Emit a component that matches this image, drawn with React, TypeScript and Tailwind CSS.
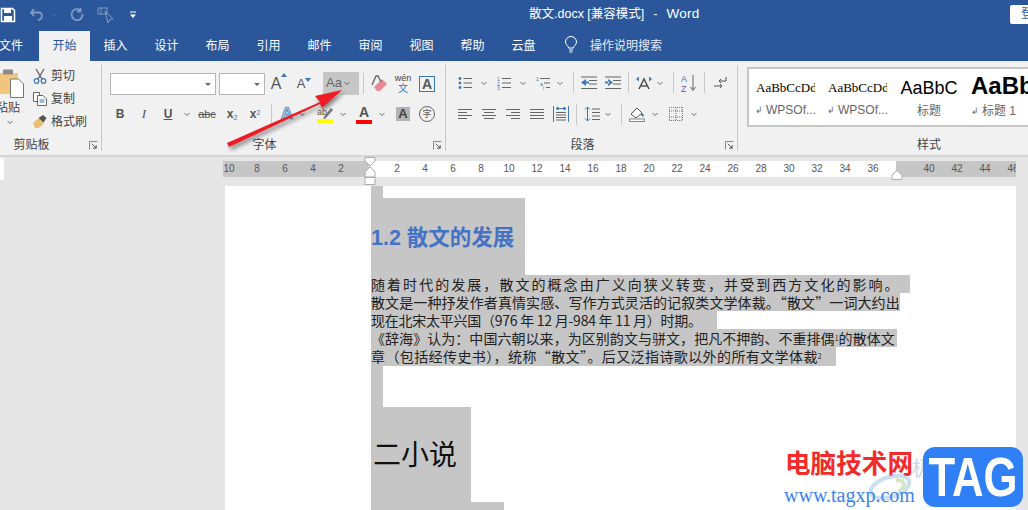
import type { ReactNode } from 'react'

const tabs = ['文件', '开始', '插入', '设计', '布局', '引用', '邮件', '审阅', '视图', '帮助', '云盘']
const leftNums = ['10', '8', '6', '4', '2', '']
const rightNums = ['2', '4', '6', '8', '10', '12', '14', '16', '18', '20', '22', '24', '26', '28', '30', '32', '34', '36', '', '40', '42', '44', '46']

function Chev({ className = '' }: { className?: string }) {
  return (
    <svg viewBox="0 0 10 10" className={`w-[10px] h-[10px] shrink-0 ${className}`}>
      <path d="M2.5 4 L5 6.5 L7.5 4" fill="none" stroke="#666" strokeWidth="1" />
    </svg>
  )
}

function Sep({ className = '' }: { className?: string }) {
  return <div className={`w-px h-[21px] bg-[#c8c8c8] shrink-0 ${className}`} />
}

function Launcher() {
  return (
    <svg viewBox="0 0 10 10" className="absolute right-[3px] bottom-[1px] w-[9px] h-[9px]">
      <path d="M.5 9.5V.5H9.5" fill="none" stroke="#777" />
      <path d="M3 3 L8 8 M8 4.5V8H4.5" fill="none" stroke="#444" />
    </svg>
  )
}

function Group({ label, className, labelClass, children }: { label: string; className: string; labelClass: string; children: ReactNode }) {
  return (
    <div className={`relative h-[86px] mt-[4px] border-r border-[#c6c6c6] shrink-0 ${className}`}>
      {children}
      <div className={`absolute left-0 right-0 bottom-[-1px] h-[14px] leading-[14px] text-center text-[12px] text-[#444] ${labelClass}`}>{label}</div>
      <Launcher />
    </div>
  )
}

// 段落 group lines, drawn from x/width pairs
function Lines({ rows }: { rows: [number, number, number][] }) {
  return (
    <svg viewBox="0 0 14 14" className="w-[14px] h-[14px] shrink-0">
      {rows.map(([x, y, w], i) => (
        <rect key={i} x={x} y={y} width={w} height="1" fill="#666" />
      ))}
    </svg>
  )
}

function Selected({ className, children }: { className: string; children: ReactNode }) {
  return (
    <div className={`bg-[#c6c6c6] h-[18px] leading-[18px] whitespace-nowrap text-[14px] text-[#222] font-['Noto_Sans_CJK_SC',sans-serif] ${className}`}>
      {children}
    </div>
  )
}

export default function App() {
  return (
    <div className="relative w-[1028px] h-[510px] overflow-hidden bg-[#e6e6e6] font-['Liberation_Sans','Noto_Sans_CJK_SC',sans-serif]">
      {/* title bar */}
      <div className="relative flex items-center h-[31px] pb-[2px] bg-[#2b579a] text-white">
        <svg viewBox="0 0 16 16" className="w-[16px] h-[16px] shrink-0">
          <path d="M1.5 1.5H12.5L14.5 3.5V14.5H1.5Z" fill="none" stroke="#fff" strokeWidth="1.6" />
          <rect x="4" y="2" width="7" height="4" fill="#fff" />
          <rect x="4" y="9" width="8" height="5" fill="#fff" />
        </svg>
        <svg viewBox="0 0 16 16" className="ml-[13px] w-[16px] h-[16px] shrink-0 opacity-40">
          <path d="M5 2 L2 5.5 L5 9 M2.5 5.5H10C14 5.5 14 12.5 9 13" fill="none" stroke="#fff" strokeWidth="1.8" />
        </svg>
        <Chev className="ml-[4px] opacity-40 invert" />
        <svg viewBox="0 0 16 16" className="ml-[10px] w-[16px] h-[16px] shrink-0 opacity-40">
          <path d="M11 3 A5.5 5.5 0 1 0 13.5 7 M11.5 1V4.5H8" fill="none" stroke="#fff" strokeWidth="1.8" />
        </svg>
        <svg viewBox="0 0 18 18" className="ml-[12px] w-[18px] h-[18px] shrink-0 opacity-40">
          <path d="M1 2H10V8H1Z M4 2V8" fill="none" stroke="#fff" />
          <path d="M8 5 L16 13 L12.5 13.5 L11 17Z" fill="none" stroke="#fff" />
        </svg>
        <svg viewBox="0 0 10 10" className="ml-[13px] w-[10px] h-[10px] shrink-0">
          <rect x="2" y="1.5" width="6" height="1" fill="#fff" />
          <path d="M2 4.5H8L5 8Z" fill="#fff" />
        </svg>
        <div className="flex items-baseline ml-[391px] w-[169px] text-[12.5px] whitespace-pre shrink-0">
          散文.docx [兼容模式]
          <span className="ml-[9px]">-</span>
          <span className="ml-[9px] text-[13.5px] tracking-[0.3px]">Word</span>
        </div>
        <div className="ml-[312px] w-[30px] h-[19px] shrink-0 bg-white rounded-[2px] text-[#2b579a] text-[12px] leading-[19px] pl-[11px] whitespace-nowrap">登录</div>
      </div>

      {/* tabs */}
      <div className="flex h-[30px] ml-[-17px] bg-[#2b579a] w-[1045px]">
        {tabs.map((t, i) => (
          <div
            key={t}
            className={
              i === 0
                ? 'w-[56px] text-center text-[12px] leading-[30px] text-white'
                : i === 1
                  ? 'w-[51px] text-center text-[12px] leading-[30px] bg-[#f1f1f1] text-[#2b579a]'
                  : 'w-[51px] text-center text-[12px] leading-[30px] text-white'
            }
          >
            {t}
          </div>
        ))}
        <svg viewBox="0 0 16 18" className="ml-[14px] mt-[5px] w-[16px] h-[18px]">
          <path d="M5.5 12C5.5 9.5 2.5 9 2.5 6A5.5 5.5 0 0 1 13.5 6C13.5 9 10.5 9.5 10.5 12Z M6 14H10 M6.5 16H9.5" fill="none" stroke="#fff" strokeWidth="1" />
        </svg>
        <div className="ml-[11px] text-[12px] leading-[30px] text-[#e4ebf5]">操作说明搜索</div>
      </div>

      {/* ribbon */}
      <div className="flex h-[94px] bg-[#f1f1f1] border-b-2 border-[#d5d5d5] box-content">
        <Group label="剪贴板" className="w-[102px]" labelClass="pr-[38px]">
          <div className="flex">
            <div className="w-[33px] h-[72px] shrink-0">
              <svg viewBox="0 0 24 30" className="mt-[3px] w-[24px] h-[30px]">
                <path d="M-2 5H18V26H-2Z" fill="#f0c67c" />
                <rect x="3" y="1.5" width="10" height="5" rx="1" fill="#8a8a8a" />
                <path d="M10.5 11H18.5L23.5 16V29.5H10.5Z" fill="#fff" stroke="#777" />
              </svg>
              <div className="mt-[2px] w-[20px] text-[12px] leading-[16px] text-[#444] whitespace-nowrap overflow-hidden flex justify-end">粘贴</div>
              <Chev className="ml-[5px] mt-[1px]" />
            </div>
            <div className="pt-[1px] text-[12px] text-[#444]">
              <div className="flex items-center h-[20px] gap-[4px]">
                <svg viewBox="0 0 14 16" className="w-[14px] h-[16px]">
                  <path d="M3 1 L9 11 M11 1 L5 11" stroke="#666" strokeWidth="1.4" fill="none" />
                  <circle cx="3.5" cy="13" r="2.3" fill="none" stroke="#3a78b8" strokeWidth="1.2" />
                  <circle cx="10.5" cy="13" r="2.3" fill="none" stroke="#3a78b8" strokeWidth="1.2" />
                </svg>
                剪切
              </div>
              <div className="flex items-center h-[20px] gap-[4px] mt-[3px]">
                <svg viewBox="0 0 14 14" className="w-[14px] h-[14px]">
                  <path d="M.5 .5H6.5V9.5H.5Z" fill="#fff" stroke="#666" />
                  <path d="M4.5 3.5H10L13.5 7V13.5H4.5Z" fill="#fff" stroke="#666" />
                  <path d="M6.5 8H11.5M6.5 10H11.5" stroke="#3a78b8" />
                </svg>
                复制
              </div>
              <div className="flex items-center h-[20px] gap-[4px] mt-[3px]">
                <svg viewBox="0 0 14 14" className="w-[14px] h-[14px]">
                  <path d="M0 8 L6 3 L11 8 L6 13 L2 13Z" fill="#e9bf74" />
                  <path d="M5.5 3 L10 0 L13.5 3 L10.5 7.5Z" fill="#555" />
                </svg>
                格式刷
              </div>
            </div>
          </div>
        </Group>

        <Group label="字体" className="w-[344px] pl-[8px] pt-[7px]" labelClass="pr-[18px]">
          <div className="flex h-[23px] items-center">
            <div className="flex items-center justify-end w-[106px] h-[22px] bg-white border border-[#b5b5b5] pr-[2px]">
              <svg viewBox="0 0 10 10" className="w-[10px] h-[10px]"><path d="M2 4H8L5 7Z" fill="#666" /></svg>
            </div>
            <div className="flex items-center justify-end ml-[3px] w-[46px] h-[22px] bg-white border border-[#b5b5b5] pr-[2px]">
              <svg viewBox="0 0 10 10" className="w-[10px] h-[10px]"><path d="M2 4H8L5 7Z" fill="#666" /></svg>
            </div>
            <div className="ml-[2px] w-[24px] flex justify-center text-[16px] text-[#555] relative">
              A<svg viewBox="0 0 6 4" className="w-[6px] h-[4px] mt-[1px]"><path d="M0 4L3 0L6 4Z" fill="#3a78b8" /></svg>
            </div>
            <div className="ml-[1px] w-[24px] flex justify-center text-[13px] text-[#555] items-end">
              A<svg viewBox="0 0 6 4" className="w-[6px] h-[4px] mb-[11px]"><path d="M0 0L3 4L6 0Z" fill="#3a78b8" /></svg>
            </div>
            <div className="ml-[7px] flex items-center w-[36px] h-[23px] bg-[#c6c6c6] pl-[3px] pb-[2px] text-[13px] text-[#666]">
              Aa<Chev />
            </div>
            <Sep className="ml-[4px]" />
            <div className="ml-[4px] w-[24px] flex justify-center">
              <svg viewBox="0 0 18 18" className="w-[18px] h-[18px]">
                <path d="M3 12 L11 4 L16 9 L9 16 L6 16Z" fill="#e98a96" />
                <path d="M1 10 L5 1 H7 L10 7" fill="none" stroke="#666" strokeWidth="1.4" />
              </svg>
            </div>
            <div className="w-[22px] text-center text-[#3a78b8]">
              <div className="text-[9px] leading-[9px] text-[#444]">wén</div>
              <div className="text-[10px] leading-[11px]">文</div>
            </div>
            <div className="ml-[5px] w-[16px] h-[16px] border border-[#3a78b8] text-[14px] leading-[14px] text-center font-bold text-[#555]">A</div>
          </div>
          <div className="flex h-[22px] items-center mt-[8px] text-[#555]">
            <div className="w-[20px] text-center text-[12px] font-bold">B</div>
            <div className="ml-[4px] w-[20px] text-center text-[13px] italic font-['Liberation_Serif',serif]">I</div>
            <div className="ml-[4px] w-[20px] text-center text-[12px] font-bold underline">U</div>
            <Chev className="ml-[4px]" />
            <div className="ml-[3px] w-[24px] text-center text-[11px] line-through">abc</div>
            <div className="ml-[3px] w-[20px] text-center text-[12px] font-bold">x<sub className="text-[7px] text-[#3a78b8] font-normal">2</sub></div>
            <div className="ml-[3px] w-[20px] text-center text-[12px] font-bold">x<sup className="text-[7px] text-[#3a78b8] font-normal">2</sup></div>
            <Sep className="ml-[6px]" />
            <div className="ml-[5px] w-[20px] text-center text-[17px] leading-[20px] font-bold text-[#a9c6e6] [-webkit-text-stroke:0.7px_#3a78b8]">A</div>
            <Chev />
            <div className="ml-[8px] w-[20px] flex flex-col items-center">
              <svg viewBox="0 0 18 14" className="w-[18px] h-[14px]">
                <text x="1" y="10" fontSize="9" fill="#555">ab</text>
                <path d="M7 13 L15 3 L17 5 L9 14Z" fill="#777" />
              </svg>
              <div className="w-[16px] h-[4px] bg-[#ffff00]" />
            </div>
            <Chev className="ml-[3px]" />
            <div className="ml-[6px] w-[20px] flex flex-col items-center">
              <div className="text-[14px] leading-[15px] font-bold">A</div>
              <div className="w-[16px] h-[4px] bg-[#ff0000]" />
            </div>
            <Chev className="ml-[3px]" />
            <div className="ml-[6px] flex justify-center w-[20px]">
              <div className="w-[14px] h-[14px] bg-[#b3b3b3] text-[13px] leading-[14px] text-center font-bold text-[#444]">A</div>
            </div>
            <div className="ml-[4px] flex justify-center w-[20px]">
              <div className="w-[16px] h-[16px] rounded-full border border-[#666] text-[9px] leading-[14px] text-center">字</div>
            </div>
          </div>
        </Group>

        <Group label="段落" className="w-[292px] pl-[12px] pt-[7px]" labelClass="pr-[18px]">
          <div className="flex h-[23px] items-center mt-[-1px]">
            <svg viewBox="0 0 14 14" className="w-[14px] h-[14px]">
              <circle cx="2" cy="2.5" r="1.4" fill="#3a78b8" /><circle cx="2" cy="7" r="1.4" fill="#3a78b8" /><circle cx="2" cy="11.5" r="1.4" fill="#3a78b8" />
              <path d="M5.5 2.5H14M5.5 7H14M5.5 11.5H14" stroke="#666" />
            </svg>
            <Chev className="ml-[7px]" />
            <svg viewBox="0 0 14 14" className="ml-[8px] w-[14px] h-[14px]">
              <text x="0" y="4.5" fontSize="5" fill="#3a78b8">1</text><text x="0" y="9.5" fontSize="5" fill="#3a78b8">2</text><text x="0" y="14" fontSize="5" fill="#3a78b8">3</text>
              <path d="M5 2.5H14M5 7H14M5 11.5H14" stroke="#666" />
            </svg>
            <Chev className="ml-[7px]" />
            <svg viewBox="0 0 14 14" className="ml-[8px] w-[14px] h-[14px]">
              <text x="0" y="4.5" fontSize="5" fill="#3a78b8">1</text><text x="4" y="9.5" fontSize="5" fill="#3a78b8">a</text><text x="7" y="14" fontSize="5" fill="#3a78b8">i</text>
              <path d="M4 2.5H14M8 7H14M10 11.5H14" stroke="#666" />
            </svg>
            <Chev className="ml-[5px]" />
            <Sep className="ml-[8px]" />
            <svg viewBox="0 0 16 14" className="ml-[7px] w-[16px] h-[14px]">
              <path d="M0 1H16M8 4.5H16M8 8H16M0 12.5H16" stroke="#666" /><path d="M0 6.5L5 3V10Z M4 5.5H8V7.5H4Z" fill="#3a78b8" />
            </svg>
            <svg viewBox="0 0 16 14" className="ml-[8px] w-[16px] h-[14px]">
              <path d="M0 1H16M8 4.5H16M8 8H16M0 12.5H16" stroke="#666" /><path d="M8 6.5L3 3V10Z M0 5.5H4V7.5H0Z" fill="#3a78b8" />
            </svg>
            <Sep className="ml-[7px]" />
            <svg viewBox="0 0 16 14" className="ml-[7px] w-[16px] h-[14px]">
              <path d="M3 13L8 3L13 13M5 10H11" fill="none" stroke="#555" strokeWidth="1.6" />
              <path d="M0 3L3 0.5V5.5Z M16 3L13 0.5V5.5Z" fill="#3a78b8" />
            </svg>
            <Chev className="ml-[3px]" />
            <Sep className="ml-[8px]" />
            <svg viewBox="0 0 16 18" className="ml-[7px] w-[16px] h-[18px]">
              <text x="0" y="8" fontSize="9" fill="#3a78b8">A</text><text x="0" y="17.5" fontSize="9" fill="#7a4fa3">Z</text>
              <path d="M12 1V16M9.5 13L12 16.5L14.5 13" fill="none" stroke="#666" />
            </svg>
            <Sep className="ml-[7px]" />
            <svg viewBox="0 0 16 14" className="ml-[7px] w-[16px] h-[14px]">
              <path d="M14 1V5H7M9 3L7 5L9 7" fill="none" stroke="#555" /><path d="M2 10H10M8 8L10 10L8 12" fill="none" stroke="#555" />
            </svg>
          </div>
          <div className="flex h-[22px] items-center mt-[9px]">
            <Lines rows={[[0, 2, 14], [0, 5, 9], [0, 8, 14], [0, 11, 9]]} />
            <div className="ml-[10px]"><Lines rows={[[0, 2, 14], [2, 5, 10], [0, 8, 14], [2, 11, 10]]} /></div>
            <div className="ml-[10px]"><Lines rows={[[0, 2, 14], [5, 5, 9], [0, 8, 14], [5, 11, 9]]} /></div>
            <div className="ml-[10px]"><Lines rows={[[0, 2, 14], [0, 5, 14], [0, 8, 14], [0, 11, 14]]} /></div>
            <svg viewBox="0 0 16 16" className="ml-[9px] w-[16px] h-[16px]">
              <path d="M.5 0V16M15.5 0V16" stroke="#3a78b8" /><path d="M3 2.5H13M3 2.5L5 1V4ZM13 2.5L11 1V4Z" stroke="#3a78b8" fill="#3a78b8" />
              <path d="M3 6.5H13M3 9H13M3 11.5H13M3 14H13" stroke="#666" />
            </svg>
            <Sep className="ml-[7px]" />
            <svg viewBox="0 0 16 16" className="ml-[7px] w-[16px] h-[16px]">
              <path d="M3.5 1V15M1 3.5L3.5 1L6 3.5M1 12.5L3.5 15L6 12.5" fill="none" stroke="#3a78b8" />
              <path d="M8 3H16M8 6.5H16M8 10H16M8 13.5H16" stroke="#666" />
            </svg>
            <Chev className="ml-[3px]" />
            <Sep className="ml-[8px]" />
            <svg viewBox="0 0 16 16" className="ml-[7px] w-[16px] h-[16px]">
              <path d="M2 8L8 2L13 7L7 12Z" fill="#fff" stroke="#555" /><path d="M12 6L15 9L14 11L12 9Z" fill="#3a78b8" />
              <rect x="0.5" y="13" width="15" height="2.5" fill="#fff" stroke="#888" />
            </svg>
            <Chev className="ml-[5px]" />
            <svg viewBox="0 0 16 16" className="ml-[8px] w-[16px] h-[16px]">
              <path d="M1 1.5H15M1 5H15M1 11H15M1 14.5H15M1.5 1V15M8 1V15M14.5 1V15" fill="none" stroke="#777" strokeDasharray="1 1" />
            </svg>
            <Chev className="ml-[5px]" />
          </div>
        </Group>

        <div className="relative w-[290px] h-[90px] ml-[9px] shrink-0">
          <div className="flex mt-[6px] h-[60px] bg-white border-y-2 border-l-2 border-[#c6c6c6] pl-[6px] overflow-hidden">
            <div className="w-[72px] shrink-0 pt-[11px]">
              <div className="ml-[1px] w-[59px] overflow-hidden whitespace-nowrap text-[13px] leading-[16px] font-['Liberation_Serif',serif] text-black">AaBbCcDd</div>
              <div className="flex items-center mt-[6px] text-[12px] leading-[16px] text-[#666] whitespace-nowrap">
                <span className="w-[11px] text-[9px]">↲</span>WPSOf...
              </div>
            </div>
            <div className="w-[72px] shrink-0 pt-[11px]">
              <div className="ml-[1px] w-[59px] overflow-hidden whitespace-nowrap text-[13px] leading-[16px] font-['Liberation_Serif',serif] text-black">AaBbCcDd</div>
              <div className="flex items-center mt-[6px] text-[12px] leading-[16px] text-[#666] whitespace-nowrap">
                <span className="w-[11px] text-[9px]">↲</span>WPSOf...
              </div>
            </div>
            <div className="w-[72px] shrink-0 pt-[7px]">
              <div className="w-[60px] text-center whitespace-nowrap text-[18px] leading-[24px] text-black">AaBbC</div>
              <div className="mt-[3px] w-[60px] text-center text-[12px] leading-[16px] text-[#666]">标题</div>
            </div>
            <div className="w-[72px] shrink-0 pt-[2px]">
              <div className="whitespace-nowrap text-[24px] leading-[30px] font-bold text-black">AaBb</div>
              <div className="flex items-center mt-[2px] text-[12px] leading-[16px] text-[#666] whitespace-nowrap">
                <span className="w-[11px] text-[9px]">↲</span>标题 1
              </div>
            </div>
          </div>
          <div className="absolute left-[170px] top-[77px] h-[14px] leading-[14px] text-[12px] text-[#444]">样式</div>
        </div>
      </div>

      {/* ruler */}
      <div className="h-[4px]" />
      <div className="relative flex ml-[223px] w-[793px] h-[16px] overflow-hidden bg-[linear-gradient(90deg,#c6c6c6_146px,#fff_146px,#fff_673px,#c6c6c6_673px)] text-[10px] leading-[16px] text-[#555]">
        <div className="flex ml-[-8px]">
          {leftNums.concat(rightNums).map((n, i) => (
            <div key={i} className="w-[28px] shrink-0 text-center">{n}</div>
          ))}
        </div>
      </div>
      <div className="absolute left-0 top-[158px] w-[4px] h-[22px] bg-white" />
      <svg viewBox="0 0 12 28" className="absolute left-[364px] top-[157px] w-[12px] h-[28px]">
        <path d="M1 .5H11V4L6 9L1 4Z M1 20V15L6 10L11 15V20Z" fill="#fff" stroke="#aaa" />
        <rect x="1" y="20.5" width="10" height="7" fill="#fff" stroke="#aaa" />
      </svg>
      <svg viewBox="0 0 12 10" className="absolute left-[891px] top-[170px] w-[12px] h-[10px]">
        <path d="M1 9.5V5L6 .5L11 5V9.5Z" fill="#fff" stroke="#aaa" />
      </svg>

      {/* page */}
      <div className="ml-[225px] mt-[9px] w-[791px] h-[324px] bg-white pl-[146px]">
        <div className="w-[12px] h-[12px] bg-[#c6c6c6]" />
        <div className="flex items-center w-[154px] h-[77px] bg-[#c6c6c6] pt-[3px] text-[21.5px] font-bold text-[#4472c4] whitespace-nowrap">1.2 散文的发展</div>
        <Selected className="w-[539px] tracking-[2.05px]">随着时代的发展，散文的概念由广义向狭义转变，并受到西方文化的影响。</Selected>
        <Selected className="w-[529px] tracking-[0.1px]">散文是一种抒发作者真情实感、写作方式灵活的记叙类文学体裁。“散文”一词大约出</Selected>
        <Selected className="w-[346px] tracking-[-0.25px]">现在北宋太平兴国（976 年 12 月-984 年 11 月）时期。</Selected>
        <Selected className="w-[526px] tracking-[0.05px]">《辞海》认为：中国六朝以来，为区别韵文与骈文，把凡不押韵、不重排偶<sup className="text-[7px]">1</sup>的散体文</Selected>
        <Selected className="w-[465px] !h-[19px] tracking-[0.4px]">章（包括经传史书），统称“散文”。后又泛指诗歌以外的所有文学体裁<sup className="text-[7px]">2</sup></Selected>
        <div className="w-[12px] h-[41px] bg-[#c6c6c6]" />
        <div className="flex items-center w-[100px] h-[95px] bg-[#c6c6c6] pl-[2px] pt-[3px] text-[28px] text-[#111] whitespace-nowrap font-['Liberation_Serif','Noto_Sans_CJK_SC',serif]">二小说</div>
        <div className="w-[133px] h-[8px] bg-[#c6c6c6]" />
      </div>

      {/* red arrow on top of the ribbon */}
      <svg viewBox="0 0 1028 510" className="absolute left-0 top-0 w-[1028px] h-[510px] pointer-events-none drop-shadow-[2px_3px_2px_rgba(0,0,0,0.45)]">
        <path d="M227 143 L320 102 L315 96 L342 90 L322 108 L320 104 L229 147Z" fill="#ee1c25" />
      </svg>

      {/* watermark */}
      <div className="absolute left-[785px] top-[448px] text-[25.6px] leading-[32px] font-bold text-[#f42a2a] whitespace-nowrap">电脑技术网</div>
      <svg viewBox="0 0 44 30" className="absolute left-[868px] top-[472px] w-[44px] h-[30px] opacity-50">
        <ellipse cx="22" cy="15" rx="20" ry="10" fill="none" stroke="#9cc0e0" strokeWidth="4" transform="rotate(-18 22 15)" />
        <path d="M28 8 C36 8 40 14 30 20" fill="none" stroke="#a8d38a" strokeWidth="4" />
      </svg>
      <div className="absolute left-[912px] top-[457px] text-[20px] leading-[24px] text-[#c9d6e4] whitespace-nowrap">极光下载站</div>
      <div className="absolute left-[784px] top-[483px] text-[20px] leading-[24px] text-[#3b82f0] whitespace-nowrap font-['Liberation_Serif',serif]">www.tagxp.com</div>
      <div className="absolute left-[923px] top-[447px] flex items-center justify-center w-[100px] h-[60px] rounded-[12px] bg-[#2f80f7] text-white font-bold text-[56px] leading-[60px]">
        <span className="scale-x-[0.78]">TAG</span>
      </div>
    </div>
  )
}
